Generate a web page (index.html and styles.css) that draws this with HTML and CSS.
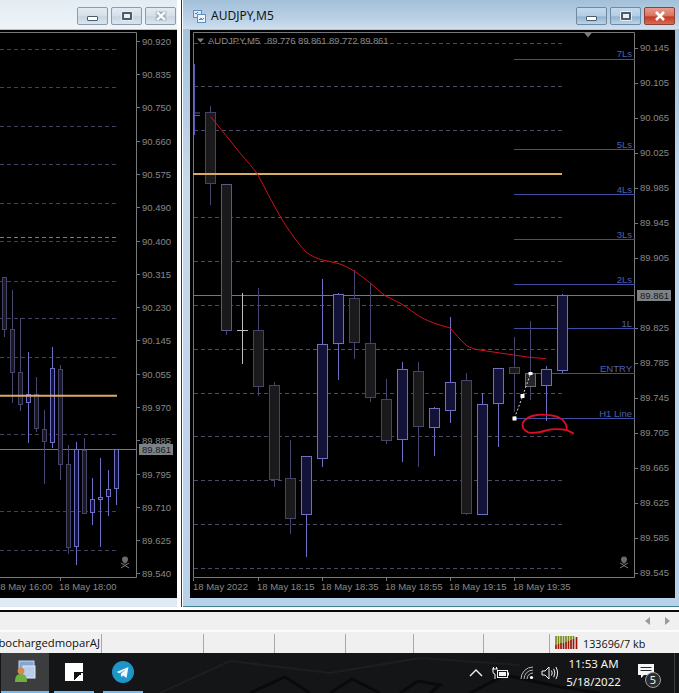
FILE: index.html
```html
<!DOCTYPE html>
<html lang="en">
<head>
<meta charset="utf-8">
<title>AUDJPY,M5</title>
<link rel="stylesheet" href="styles.css">
</head>
<body>
<main class="desktop">
  <section class="win win-left">
    <header class="titlebar">
      <div class="buttons">
        <button class="wbtn"><span class="g-min"></span></button>
        <button class="wbtn"><span class="g-max"></span></button>
        <button class="wbtn"><svg class="g-x" viewBox="0 0 12 10"><path d="M2 1l8 8M10 1l-8 8"/></svg></button>
      </div>
    </header>
    <svg class="chart chart-left" viewBox="0 30 177 568">
      <g class="grid">
        <path d="M0 49.5H117M0 87.5H117M0 126.5H117M0 164.5H117M0 203.5H117M0 241.5H117M0 281.5H117M0 318.5H117M0 357.5H117M0 434.5H117M0 511.5H117M0 550.5H117"/>
        <path class="grid-bright" d="M0 237.5H117"/>
      </g>
      <path class="frame" d="M0 32.5H136.5V577.5H0"/>
      <path class="frame" d="M137 41.5h3M137 74.5h3M137 107.5h3M137 141.5h3M137 174.5h3M137 207.5h3M137 241.5h3M137 274.5h3M137 307.5h3M137 340.5h3M137 374.5h3M137 407.5h3M137 440.5h3M137 474.5h3M137 507.5h3M137 540.5h3M137 573.5h3M60.5 578v3"/>
      <path class="pline" d="M0 449.5H137"/>
      <g class="candles">
        <path class="wd" d="M4.5 329V337M12.5 290V403M20.5 318V411M36.5 377V432M44.5 410V484M60.5 365V480M68.5 445V554M84.500 438V513"/>
        <path class="wu" d="M28.5 352V443M52.5 347V448M76.5 442V565M92.5 478V525M100.5 458V547M108.5 470V516M116.5 449V505"/>
        <rect class="bd" x="2.5" y="277.5" width="4" height="52"/>
        <rect class="bd" x="10.5" y="329.5" width="4" height="43"/>
        <rect class="bd" x="18.5" y="372.5" width="4" height="32"/>
        <rect class="bu" x="26.5" y="394.5" width="4" height="8"/>
        <rect class="bd" x="34.5" y="394.5" width="4" height="34"/>
        <rect class="bd" x="42.5" y="429.5" width="4" height="12"/>
        <rect class="bu" x="50.5" y="368.5" width="4" height="74"/>
        <rect class="bd" x="58.5" y="369.5" width="4" height="95"/>
        <rect class="bd" x="66.5" y="464.5" width="4" height="83"/>
        <rect class="bu" x="74.5" y="449.5" width="4" height="97"/>
        <rect class="bd" x="82.5" y="450.5" width="4" height="63"/>
        <rect class="bu" x="90.5" y="499.5" width="4" height="13"/>
        <rect class="bu" x="98.5" y="497.5" width="4" height="2"/>
        <rect class="bu" x="106.5" y="489.5" width="4" height="7"/>
        <rect class="bu" x="114.5" y="449.5" width="4" height="39"/>
      </g>
      <path class="gold" d="M0 395.7H117"/>
      <g class="skull">
        <circle cx="125" cy="559.5" r="3"/><rect x="123.5" y="561" width="3" height="2.5"/>
        <path d="M121 563l8 5M129 563l-8 5"/>
      </g>
      <g class="axis">
        <text x="142" y="45">90.920</text><text x="142" y="78">90.835</text><text x="142" y="111">90.750</text><text x="142" y="145">90.660</text><text x="142" y="178">90.575</text><text x="142" y="211">90.490</text><text x="142" y="245">90.400</text><text x="142" y="278">90.315</text><text x="142" y="311">90.230</text><text x="142" y="344">90.145</text><text x="142" y="378">90.055</text><text x="142" y="411">89.970</text><text x="142" y="444">89.885</text><text x="142" y="478">89.795</text><text x="142" y="511">89.710</text><text x="142" y="544">89.625</text><text x="142" y="577">89.540</text>
        <rect class="tag" x="139" y="444" width="34" height="11"/>
        <text class="tag-text" x="142" y="453">89.861</text>
        <text x="-5" y="590">18 May 16:00</text><text x="59" y="590">18 May 18:00</text>
      </g>
    </svg>
  </section>

  <section class="win win-right">
    <header class="titlebar titlebar-active">
      <svg class="appicon" viewBox="0 0 13 13">
        <rect x="0.5" y="0.5" width="8" height="7" fill="#dce9f6" stroke="#5f8fc0"/>
        <rect x="4.5" y="4.5" width="8" height="8" fill="#eef5fc" stroke="#5f8fc0"/>
        <path d="M2 3l1 1 2-2M6 9l1 1 1-2 1 2 2-2" fill="none" stroke="#4a78a8"/>
      </svg>
      <h1 class="wintitle">AUDJPY,M5</h1>
      <div class="buttons">
        <button class="wbtn wbtn-on"><span class="g-min"></span></button>
        <button class="wbtn wbtn-on"><span class="g-max"></span></button>
        <button class="wbtn wbtn-close"><svg class="g-x" viewBox="0 0 12 10"><path d="M2 1l8 8M10 1l-8 8"/></svg></button>
      </div>
    </header>
    <svg class="chart chart-right" viewBox="190 30 485 568">
      <g class="grid">
        <path d="M194 43.5H564M194 86.5H564M194 130.5H564M194 217.5H564M194 261.5H564M194 305.5H564M194 349.5H564M194 393.5H564M194 436.5H564M194 480.5H564M194 524.5H564M194 568.5H564"/>
      </g>
      <path class="frame" d="M193.5 577.5V32.5H634.5V577.5H193.5"/>
      <path class="frame" d="M635 48.5h3M635 83.5h3M635 118.5h3M635 153.5h3M635 188.5h3M635 223.5h3M635 258.5h3M635 328.5h3M635 363.5h3M635 398.5h3M635 433.5h3M635 468.5h3M635 503.5h3M635 538.5h3M635 573.5h3M193.5 578v3M258.5 578v3M322.5 578v3M386.5 578v3M450.5 578v3M514.5 578v3"/>
      <path class="toptri" d="M584 32.5h8l-4 5z"/>
      <path class="toptri" d="M197 38.5h7l-3.5 4z"/>
      <path class="pline" d="M193 295.5H635"/>
      <g class="levels">
        <path d="M514 59.5H635M514 149.5H635M514 194.5H635M514 239.5H635M514 284.5H635M514 328.5H635M526 373.5H635M514 418.5H635"/>
        <text x="632" y="57">7Ls</text><text x="632" y="148">5Ls</text><text x="632" y="193">4Ls</text><text x="632" y="238">3Ls</text><text x="632" y="283">2Ls</text><text x="632" y="327">1L</text><text x="632" y="372">ENTRY</text><text x="632" y="417">H1 Line</text>
      </g>
      <path class="edgebar" d="M194.5 64V135M194.5 113H200M194.5 115.5H200"/>
      <g class="candles">
        <path class="wd" d="M210.5 106V205M226.5 330V335M258.5 288V396M274.5 382V487M290.5 440V534M354.5 270V359M370.5 283V402M386.5 379V444M418.5 362V467M466.5 373V515M514.5 337V412M530.5 321V400"/>
        <path class="wu" d="M306.5 515V557M322.5 279V467M338.5 293V380M402.5 362V462M434.5 407V456M450.5 317V423M482.5 393V515M498.5 403V447M546.5 366V421M562.5 294V373"/>
        <path class="doji" d="M242.5 293V364M237 330.5H248"/>
        <rect class="bd" x="205.5" y="112.5" width="10" height="71"/>
        <rect class="bd bd2" x="221.5" y="184.5" width="10" height="146"/>
        <rect class="bd" x="253.5" y="330.5" width="10" height="56"/>
        <rect class="bd" x="269.5" y="385.5" width="10" height="94"/>
        <rect class="bd" x="285.5" y="478.5" width="10" height="40"/>
        <rect class="bu" x="301.5" y="456.5" width="10" height="58"/>
        <rect class="bu" x="317.5" y="344.5" width="10" height="114"/>
        <rect class="bu" x="333.5" y="294.5" width="10" height="49"/>
        <rect class="bd" x="349.5" y="298.5" width="10" height="44"/>
        <rect class="bd" x="365.5" y="343.5" width="10" height="54"/>
        <rect class="bd" x="381.5" y="399.5" width="10" height="41"/>
        <rect class="bu" x="397.5" y="369.5" width="10" height="70"/>
        <rect class="bd" x="413.5" y="371.5" width="10" height="55"/>
        <rect class="bu" x="429.5" y="408.5" width="10" height="19"/>
        <rect class="bu" x="445.5" y="382.5" width="10" height="28"/>
        <rect class="bd" x="461.5" y="380.5" width="10" height="133"/>
        <rect class="bu" x="477.5" y="404.5" width="10" height="110"/>
        <rect class="bu" x="493.5" y="368.5" width="10" height="35"/>
        <rect class="bd" x="509.5" y="367.5" width="10" height="6"/>
        <rect class="bd bd3" x="525.5" y="373.5" width="10" height="13"/>
        <rect class="bu" x="541.5" y="369.5" width="10" height="16"/>
        <rect class="bu" x="557.5" y="295.5" width="10" height="75"/>
      </g>
      <path class="gold" d="M193 174H562"/>
      <path class="ma" d="M210.700 116.700L224 133L241.700 155C248 162 252 167 256.700 173C263 184 268 195 275 207C281 218 285 225 291 233C296 240 300 246 306.700 252.700C312 256 316 258 320 259.500C327 261 333 262 340 264C346 266 350 269 354.300 271C360 275 365 279 370 282.700C375 287 380 292 385 295.700C392 299 398 302 403.300 305C409 309 414 313 420 316.700C426 320 431 322 436.700 324L450 328C455 333 460 340 466.700 345.700C471 348 475 349.500 480 350L513.300 355L530 357.300L546 358.700"/>
      <path class="trend" d="M514.5 418L522.7 396L530.5 373.5"/>
      <g class="nodes"><rect x="512.5" y="416.5" width="4" height="4"/><rect x="520.5" y="394" width="4" height="4"/><rect x="528.5" y="372" width="4" height="3"/></g>
      <path class="scribble" d="M566.700 428C566.500 423 564 420 558 417C552 415 542 414 536.700 415C530 416 525 419 523 422.500C521.500 426 523 430 528.300 432.300C533 433.500 540 432.500 546 430.500C553 428.500 561 429 566.700 430L573.300 433.300"/>
      <g class="skull">
        <circle cx="624" cy="559.5" r="3"/><rect x="622.5" y="561" width="3" height="2.5"/>
        <path d="M620 563l8 5M628 563l-8 5"/>
      </g>
      <g class="axis">
        <text x="208" y="44">AUDJPY,M5</text><text x="267" y="44" class="ohlc">89.776 89.861 89.772 89.861</text>
        <text x="640" y="51">90.145</text><text x="640" y="86">90.105</text><text x="640" y="121">90.065</text><text x="640" y="156">90.025</text><text x="640" y="191">89.985</text><text x="640" y="226">89.945</text><text x="640" y="261">89.905</text><text x="640" y="331">89.825</text><text x="640" y="366">89.785</text><text x="640" y="401">89.745</text><text x="640" y="436">89.705</text><text x="640" y="471">89.665</text><text x="640" y="506">89.625</text><text x="640" y="541">89.585</text><text x="640" y="576">89.545</text>
        <rect class="tag" x="637" y="290" width="34" height="11"/>
        <text class="tag-text" x="640" y="299">89.861</text>
        <text x="193" y="590">18 May 2022</text><text x="257" y="590">18 May 18:15</text><text x="321" y="590">18 May 18:35</text><text x="385" y="590">18 May 18:55</text><text x="449" y="590">18 May 19:15</text><text x="513" y="590">18 May 19:35</text>
      </g>
    </svg>
  </section>
</main>

<div class="tabstrip">
  <svg class="arrow" viewBox="0 0 6 8"><path d="M5 0v8L0 4z"/></svg>
  <svg class="arrow" viewBox="0 0 6 8"><path d="M1 0v8l5-4z"/></svg>
</div>

<footer class="statusbar">
  <div class="cell cell-a"><span class="clipname">TurbochargedmoparAJ</span></div>
  <div class="cell cell-b"></div>
  <div class="cell cell-c"></div>
  <div class="cell cell-d"></div>
  <div class="cell cell-e"></div>
  <div class="cell cell-f"></div>
  <div class="cell cell-g"></div>
  <div class="cell cell-h">
    <svg class="meter" viewBox="0 0 24 13">
      <path class="m-red" d="M1 13V9M3.5 13V8M6 13V7M8.5 13V7M11 13V6M13.5 13V5M16 13V4M18.5 13V3M21.5 13V1"/>
      <path class="m-green" d="M1 9V0M3.5 8V0M6 7V0M8.5 7V0M11 6V0M13.5 5V0M16 4V0M18.5 3V0"/>
    </svg>
    <span class="memtext">133696/7 kb</span>
  </div>
</footer>

<nav class="taskbar">
  <svg class="wallpaper" viewBox="0 0 679 40">
    <path d="M250 40L285 24L310 40M330 40L352 26L380 40M400 40L418 28L440 32L430 40M470 40L505 22L560 34L600 40"/>
    <path class="wp-soft" d="M160 40L230 8L330 20L420 5L520 12"/>
  </svg>
  <div class="tbtn tbtn-active">
    <svg class="ti" viewBox="0 0 22 24">
      <rect x="5" y="1" width="15" height="11" fill="#7fa7d8" stroke="#c4d8ef"/>
      <rect x="9" y="6" width="12" height="12" fill="#b8cdea" stroke="#dfe9f6"/>
      <circle cx="7" cy="11" r="3.4" fill="#d9894f"/>
      <path d="M1 22c0-6 2-8 6-8s6 2 6 8z" fill="#6fae3f"/>
    </svg>
  </div>
  <div class="tbtn tbtn-b">
    <div class="blackwhite"></div>
  </div>
  <div class="tbtn tbtn-c">
    <svg class="ti tg" viewBox="0 0 22 22">
      <circle cx="11" cy="11" r="11" fill="#1f94c9"/>
      <path d="M4.5 11l12-5-2 11-3.5-2.6-1.6 1.8-.6-3.4 5.2-4.6-6.4 4z" fill="#eef7fc"/>
    </svg>
  </div>
  <div class="tray">
    <svg class="tr tr-chev" viewBox="0 0 14 8"><path d="M1 7l6-6 6 6"/></svg>
    <svg class="tr tr-batt" viewBox="0 0 17 12"><path d="M0 2h6M1.500 0v2M4.500 0v2M1 2v3q0 2 2 2v5"/><rect x="5.500" y="3.500" width="10" height="7"/><rect class="fill" x="7" y="5" width="7" height="4"/><path d="M16.500 5.500v3"/></svg>
    <svg class="tr tr-wifi" viewBox="0 0 14 14"><path d="M1 13a12 12 0 0 1 12-12M4 13a9 9 0 0 1 9-9M7 13a6 6 0 0 1 6-6"/><circle class="dot" cx="11.5" cy="11.5" r="1.6"/></svg>
    <svg class="tr tr-vol" viewBox="0 0 17 14"><path d="M1 5v4h3l4 4V1L4 5zM10.5 4.5q1.4 2.5 0 5M12.7 2.8q2.4 4.2 0 8.4M14.9 1q3.4 6 0 12"/></svg>
    <div class="clock"><span>11:53 AM</span><span>5/18/2022</span></div>
    <div class="notify">
      <svg class="bubble" viewBox="0 0 16 15"><path d="M0 0h16v11H6l-3 3v-3H0z"/><path class="lines" d="M2.500 3.500h11M2.500 6.500h11"/></svg>
      <span class="badge">5</span>
    </div>
  </div>
</nav>
</body>
</html>
```
FILE: styles.css
```css
* { box-sizing: border-box; margin: 0; padding: 0; }
html, body { width: 679px; height: 693px; overflow: hidden; background: #f0f0f0; }
body { display: flex; flex-direction: column; font-family: "Noto Sans", sans-serif; }

.desktop { display: flex; height: 612px; flex: none; background: #fff; border-bottom: 2px solid #0a0a0a; }
.win { display: flex; flex-direction: column; height: 607px; }
.win-left { width: 182px; padding-right: 4px; background: #dfeaf4; border-right: 1px solid #2b3a40; box-shadow: inset -4px 0 0 #fff; }
.win-right { width: 497px; margin-left: 1px; padding: 0 4px 0 7px; background: linear-gradient(#9fbdd8, #c4d9ec 30%, #b8d1ea); border-bottom: 1px solid #3d7f8a; }

.titlebar { display: flex; align-items: flex-start; height: 30px; flex: none; margin: 0 -4px 0 0; background: linear-gradient(#e3ecf3, #eff4f8); border-bottom: 1px solid #b9c0c6; }
.win-left .titlebar { margin-right: 0; }
.titlebar-active { margin: 0 -4px 0 -7px; background: linear-gradient(#a3c0da, #bcd2e6 70%, #cfdfed); }
.appicon { width: 13px; height: 13px; margin: 10px 0 0 10px; }
.wintitle { margin: 7px 0 0 5px; font-size: 12px; font-weight: 400; line-height: 17px; color: #10161c; }
.buttons { display: flex; gap: 3px; margin: 7px 4px 0 auto; }
.win-left .buttons { margin-right: 1px; }
.wbtn { display: flex; align-items: center; justify-content: center; width: 31px; height: 18px; border: 1px solid #8c9cab; border-radius: 2px; background: linear-gradient(#e4ebf2, #d3dfe9 50%, #c7d5e2 55%, #dbe5ee); }
.wbtn-on { border-color: #6d8aa6; background: linear-gradient(#c3d8ea, #b4cde3 50%, #93b2cf 55%, #bcd4e9); }
.wbtn-close { border-color: #8a4238; background: linear-gradient(#e89c8c, #d9705e 50%, #c23a27 55%, #d96a50); }
.g-min { display: block; width: 11px; height: 5px; margin-top: 4px; border: 1px solid #4a5c6c; border-radius: 1px; background: #fff; }
.g-max { display: block; width: 10px; height: 8px; border: 2px solid #4a5c6c; border-radius: 1px; background: #e8eef4; box-shadow: 0 0 0 1px #e8eef4; }
.g-x { display: block; width: 12px; height: 10px; }
.g-x path { fill: none; stroke: #fff; stroke-width: 2.6; }
.wbtn:not(.wbtn-close) .g-x path { stroke: #f6f8fa; filter: drop-shadow(0 0 1px #3b4a58); }

.chart { display: block; flex: none; height: 568px; background: #000; }
.chart-left { width: 177px; }
.chart-right { width: 485px; }

.grid path { fill: none; stroke: #45405f; stroke-dasharray: 4 3; }
.grid .grid-bright { stroke: #7a7a8c; }
.chart-right .grid path { stroke: #4d4a63; }
.frame { fill: none; stroke: #77787a; }
.pline { fill: none; stroke: #77787a; }
.toptri { fill: #7f7f7f; }
.gold { fill: none; stroke: #d8ac62; stroke-width: 2; }
.ma { fill: none; stroke: #d3101c; stroke-width: 1; }
.trend { fill: none; stroke: #d8d8e8; stroke-dasharray: 2 2; }
.nodes rect { fill: #fff; }
.scribble { fill: none; stroke: #dc0d24; stroke-width: 1.9; stroke-linecap: round; }
.edgebar { fill: none; stroke: #5a5ab4; }

.wu { fill: none; stroke: #6e6ec4; }
.wd { fill: none; stroke: #47466f; }
.bu { fill: #13133a; stroke: #6e6ec4; }
.bd { fill: #1a1a1c; stroke: #45436a; }
.bd2 { stroke: #59578c; }
.bd3 { stroke: #6a6a70; fill: #26262a; }
.doji { fill: none; stroke: #bdbdbd; }

.axis text { font-family: "Liberation Sans", sans-serif; font-size: 9.5px; fill: #87888a; }
.axis .ohlc { letter-spacing: -.1px; }
.axis .tag { fill: #7d8286; }
.axis .tag-text { fill: #1a1a1a; }
.levels path { fill: none; stroke: #3e4ea4; }
.levels text { font-family: "Liberation Sans", sans-serif; font-size: 9.5px; fill: #4f60ad; text-anchor: end; }
.skull { fill: #6b6b6b; stroke: none; }
.skull path { fill: none; stroke: #7c7c7c; stroke-width: 1; }

.tabstrip { display: flex; align-items: center; justify-content: flex-end; gap: 13px; height: 20px; flex: none; padding-right: 9px; background: #f0f0f0; border-bottom: 2px solid #fbfbfb; }
.arrow { width: 6px; height: 8px; fill: #9a9a9a; }

.statusbar { display: flex; height: 21px; flex: none; background: #f0f0f0; font-family: "Open Sans", sans-serif; font-size: 11.3px; color: #111; }
.cell { height: 19px; margin-top: 2px; border-right: 1px solid #a8a8a8; }
.cell-a { display: flex; justify-content: flex-end; width: 102px; overflow: hidden; line-height: 17px; padding-right: 1px; }
.clipname { white-space: nowrap; }
.cell-b { width: 102px; }
.cell-c { width: 71px; }
.cell-d { width: 71px; }
.cell-e { width: 68px; }
.cell-f { width: 70px; }
.cell-g { width: 66px; }
.cell-h { display: flex; align-items: flex-start; flex: 1; gap: 4px; padding: 2px 0 0 5px; border-right: 0; line-height: 15px; }
.memtext { font-size: 10.8px; }
.meter { width: 24px; height: 13px; flex: none; }
.m-red, .m-green { fill: none; stroke-width: 1.7; }
.m-red { stroke: #9c1408; }
.m-green { stroke: #7c8c1c; }

.taskbar { position: relative; display: flex; height: 40px; flex: none; background: #141517; color: #f2f2f2; }
.wallpaper { position: absolute; inset: 0; width: 100%; height: 100%; }
.wallpaper path { fill: none; stroke: #0a0a0b; stroke-width: 3; }
.wallpaper .wp-soft { stroke: #1d1e20; stroke-width: 2; }
.tbtn { position: relative; display: flex; align-items: center; justify-content: center; height: 40px; border-bottom: 2px solid #76b9ed; }
.tbtn-active { width: 48px; margin-left: 1px; background: #3c3d3f; }
.tbtn-b { width: 40px; margin-left: 5px; }
.tbtn-c { width: 40px; margin-left: 9px; }
.ti { width: 22px; height: 24px; }
.tg { height: 22px; }
.blackwhite { position: relative; width: 18px; height: 18px; background: #fff; }
.blackwhite::after { content: ""; position: absolute; right: 0; bottom: 0; width: 9px; height: 9px; background: linear-gradient(135deg, #111 50%, #fff 50%); }

.tray { position: relative; display: flex; align-items: center; height: 40px; margin-left: auto; margin-right: 4px; border-right: 1px solid #3c3d3f; }
.tr { flex: none; fill: none; stroke: #f2f2f2; }
.tr-chev { width: 14px; height: 8px; margin-right: 9px; stroke-width: 1.4; }
.tr-batt { width: 17px; height: 12px; margin-right: 11px; }
.tr-batt .fill { fill: #f2f2f2; stroke: none; }
.tr-wifi { width: 14px; height: 14px; margin-right: 7px; stroke: #b8b8b8; }
.tr-wifi .dot { fill: #fff; stroke: none; }
.tr-vol { width: 17px; height: 14px; margin-right: 7px; }
.clock { display: flex; flex-direction: column; width: 57px; align-items: center; font-size: 11.5px; line-height: 18px; }
.notify { position: relative; width: 40px; height: 40px; margin-left: 12px; }
.bubble { position: absolute; left: 4px; top: 11px; width: 16px; height: 15px; fill: #f7f7f7; }
.bubble .lines { fill: none; stroke: #2a2a2a; }
.badge { position: absolute; left: 11px; top: 19px; width: 16px; height: 16px; border: 1px solid #a0a0a0; border-radius: 50%; background: #2b2c2e; font-size: 11px; line-height: 14px; text-align: center; }
```
